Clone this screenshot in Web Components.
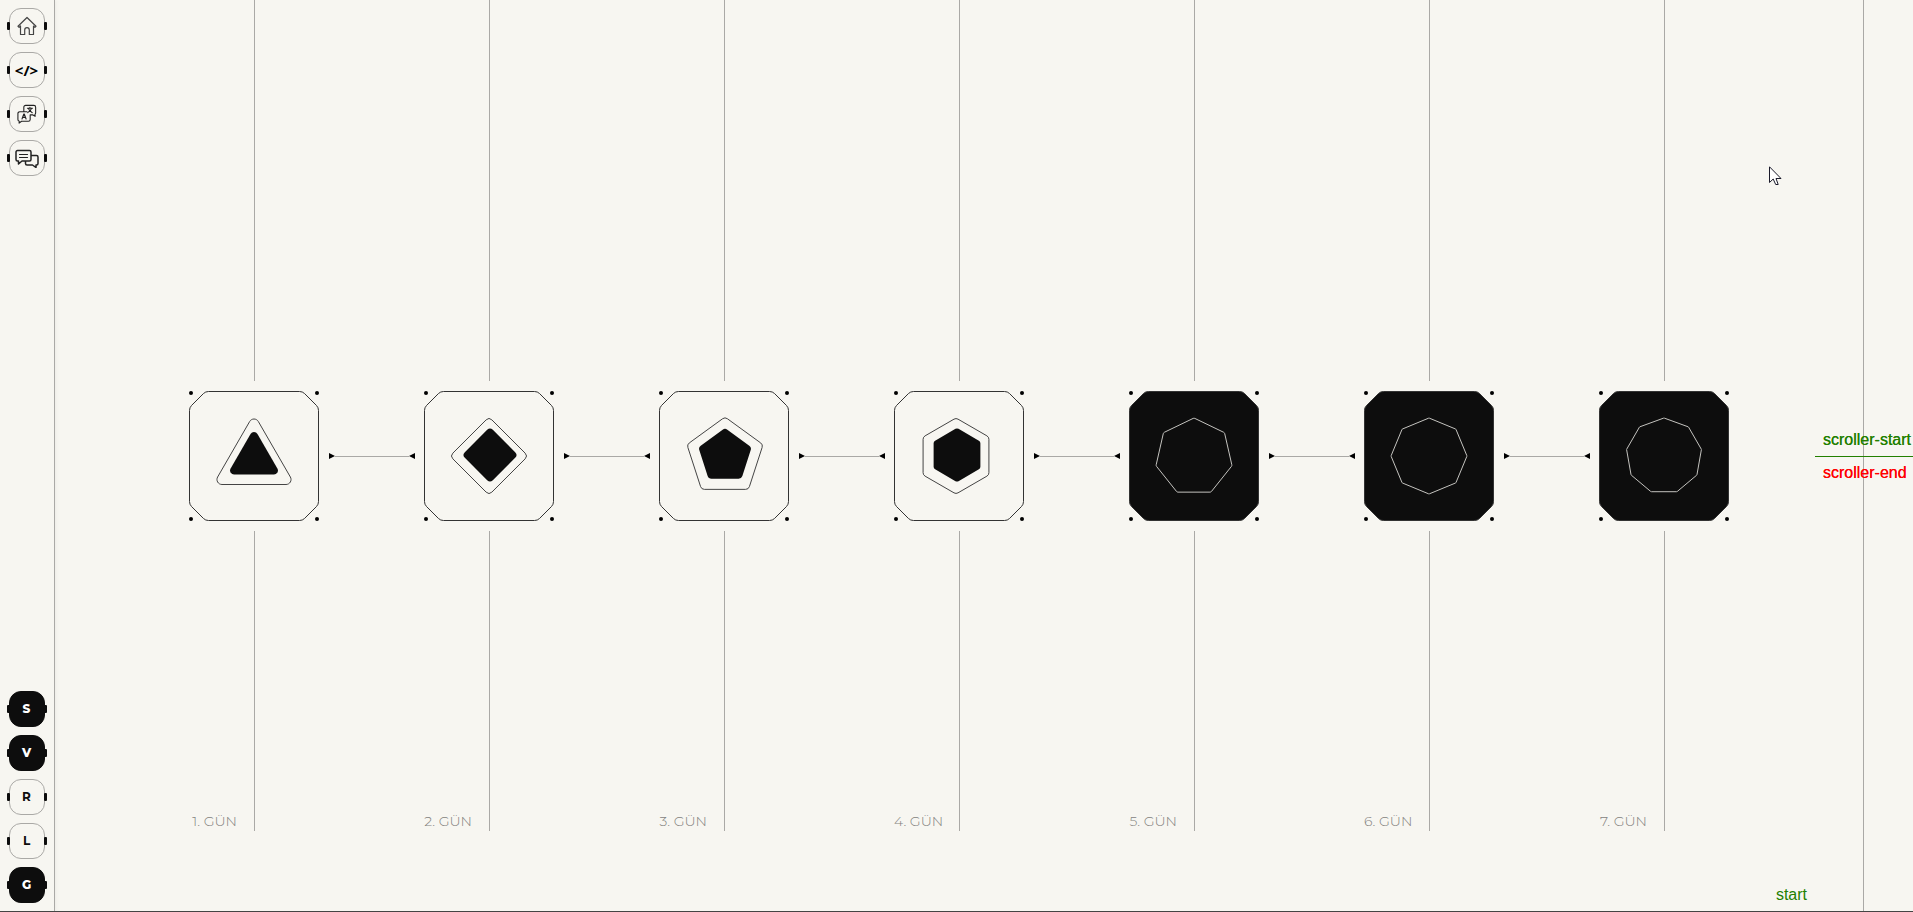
<!DOCTYPE html>
<html lang="tr">
<head>
<meta charset="utf-8">
<title>Haftalık Plan</title>
<style>
  :root { --bg: #f7f6f1; --ink: #0d0d0d; --rule: #aaa9a6; }
  body { margin: 0; background: var(--bg); color: var(--ink); font-family: Montserrat, Inter, sans-serif; }
</style>
</head>
<body>
<week-app></week-app>
<script>
const SHAPES = [
  { outer: [3, 65, 70, 47, 5], inner: [3, 65, 68, 31, 4] },
  { outer: [4, 65, 65, 39, 4], inner: [4, 66, 64, 28, 4] },
  { outer: [5, 66, 66, 40, 4], inner: [5, 66, 65, 28, 4] },
  { outer: [6, 62, 65, 38, 4], inner: [6, 63, 64, 27, 3] },
  { outer: [7, 65, 66, 39, 2], dark: true },
  { outer: [8, 65, 65, 38, 1], dark: true },
  { outer: [9, 65, 65, 38, 1], dark: true }
];

// Path of a regular polygon, one vertex up, with its corners rounded to the given radius.
function polygon([sides, cx, cy, size, radius]) {
  const half = Math.PI * (sides - 2) / sides / 2;
  const cut = radius / Math.tan(half);
  const pts = Array.from({ length: sides }, (_, i) => {
    const a = -Math.PI / 2 + i * 2 * Math.PI / sides;
    return [cx + size * Math.cos(a), cy + size * Math.sin(a)];
  });
  const toward = (p, q) => {
    const d = Math.hypot(q[0] - p[0], q[1] - p[1]);
    return [p[0] + (q[0] - p[0]) * cut / d, p[1] + (q[1] - p[1]) * cut / d].map(n => n.toFixed(2)).join(' ');
  };
  return pts.map((p, i) => {
    const prev = pts[(i + sides - 1) % sides], next = pts[(i + 1) % sides];
    return `${i ? 'L' : 'M'}${toward(p, prev)}A${radius} ${radius} 0 0 1 ${toward(p, next)}`;
  }).join('') + 'Z';
}

class DockButton extends HTMLElement {
  constructor() {
    super();
    this.attachShadow({ mode: 'open' }).innerHTML = `
      <style>
        :host { display: block; position: relative; width: 36px; height: 36px; }
        :host::before, :host::after { content: ""; position: absolute; top: 14px; width: 3px; height: 8px; border-radius: 1px; background: var(--ink); }
        :host::before { left: -2px; }
        :host::after { right: -2px; }
        button { display: grid; place-items: center; box-sizing: border-box; width: 100%; height: 100%; margin: 0; padding: 0 1px 1px 0;
          border: 1px solid var(--rule); border-radius: 12px; background: var(--bg); color: var(--ink);
          font: 700 12px/16px Montserrat, Inter, sans-serif; cursor: pointer; }
        :host([filled]) button { background: var(--ink); border-color: var(--ink); color: #fff; font-weight: 800; }
        :host([code]) button { font: 700 15px/16px "Noto Sans", sans-serif; color: #000; }
      </style>
      <button type="button"><slot></slot></button>`;
    this.shadowRoot.querySelector('button').setAttribute('aria-label', this.getAttribute('label') || this.textContent.trim());
  }
}

class SideDock extends HTMLElement {
  constructor() {
    super();
    this.attachShadow({ mode: 'open' }).innerHTML = `
      <style>
        :host { display: block; flex: none; box-sizing: border-box; width: 55px; border-right: 1px solid var(--rule); box-shadow: 1px 0 4px #0000000c; }
        nav { display: flex; flex-direction: column; justify-content: space-between; box-sizing: border-box; height: 100%; padding: 8px 9px 9px; }
        div { display: grid; gap: 8px; }
        svg { display: block; fill: none; stroke: #222; }
      </style>
      <nav aria-label="Menü">
        <div>
          <dock-button label="Ana sayfa">
            <svg width="20" height="20" viewBox="0 0 20 20" stroke-width="1.200" stroke-linejoin="round"><path stroke="#444" d="M10 1.500 1 10.300l1.100 1.100L3.500 10V18.500H7.700V14a2.300 2.300 0 0 1 4.600 0v4.500h4.200V10l1.400 1.400L19 10.300Z"/></svg>
          </dock-button>
          <dock-button code label="Kod">&lt;/&gt;</dock-button>
          <dock-button label="Çeviri">
            <svg width="20" height="20" viewBox="0 0 22 22" stroke-width="1.200" stroke-linecap="round" stroke-linejoin="round"><path d="M7.500 8.500V3.500a2 2 0 0 1 2-2h9a2 2 0 0 1 2 2v6.500a2 2 0 0 1-.8 1.500l.3 2-2.500-1.500h-2.500M11 8.500H3a2 2 0 0 0-2 2v6.500a2 2 0 0 0 1.500 2l-.2 2L5 19h7.500a2 2 0 0 0 2-2v-5"/><path d="M11.500 4.700h5.500M14.200 3.500v1.200M12.500 4.900c.6 2 2.200 3.600 4.300 4.600M16 4.900c-.6 2-2.200 3.600-4.200 4.600M5.500 16.500l2-5.500h.5l2 5.500M6.300 14.700h3"/></svg>
          </dock-button>
          <dock-button label="Sohbet">
            <svg width="24" height="20" viewBox="0 0 24 20" stroke-width="1.500" stroke-linejoin="round"><path d="M2.500 2.500h12a1.500 1.500 0 0 1 1.500 1.500v7.500a1.500 1.500 0 0 1-1.500 1.500H7L3.500 16v-3h-1A1.500 1.500 0 0 1 1 11.500V4a1.500 1.500 0 0 1 1.500-1.500Z"/><path d="M16 7.500h5.500A1.500 1.500 0 0 1 23 9v6.500a1.500 1.500 0 0 1-1.500 1.500H21v2.500L17.500 17H12a1.500 1.500 0 0 1-1.500-1.500V13"/><path d="M4.500 6.500h8M4.500 9.500h8" stroke-width="1.200" stroke-linecap="round"/></svg>
          </dock-button>
        </div>
        <div>
          <dock-button filled>S</dock-button>
          <dock-button filled>V</dock-button>
          <dock-button>R</dock-button>
          <dock-button>L</dock-button>
          <dock-button filled>G</dock-button>
        </div>
      </nav>`;
  }
}

class DayColumn extends HTMLElement {
  constructor() {
    super();
    const day = Number(this.getAttribute('day'));
    const { outer, inner, dark } = SHAPES[day - 1];
    this.attachShadow({ mode: 'open' }).innerHTML = `
      <style>
        :host { display: grid; grid-template-rows: minmax(0, 1fr) 130px minmax(0, 1fr); gap: 10px; width: 130px; flex: none; }
        .line { width: 1px; margin-left: 65px; background: var(--rule); }
        .foot { display: flex; align-items: flex-end; padding-bottom: 81px; }
        .foot p { box-sizing: border-box; width: 65px; margin: 0; padding-right: 17px; text-align: right; white-space: nowrap;
          font: 300 14px/20px Montserrat, Inter, sans-serif; color: #84837f; }
        .foot .line { align-self: stretch; margin: 0; }
        button { display: block; padding: 0; border: 0; background: none; cursor: pointer; }
        svg { display: block; fill: none; stroke-width: 1; }
      </style>
      <div class="line"></div>
      <button type="button" aria-label="${day}. gün">
        <svg width="130" height="130" viewBox="0 0 130 130">
          <path fill="${dark ? '#0d0d0d' : 'none'}" stroke="#333" d="M.5 19.500Q.5 16.500 2.500 14.500L14.500 2.500Q16.500 .5 19.500 .5H110.500Q113.500 .5 115.500 2.500L127.500 14.500Q129.500 16.500 129.500 19.500V110.500Q129.500 113.500 127.500 115.500L115.500 127.500Q113.500 129.500 110.500 129.500H19.500Q16.500 129.500 14.500 127.500L2.500 115.500Q.5 113.500 .5 110.500Z"/>
          <path stroke="${dark ? '#c4c3bf' : '#444'}" d="${polygon(outer)}"/>
          ${inner ? `<path fill="#0d0d0d" d="${polygon(inner)}"/>` : ''}
          <g fill="#000"><circle cx="2" cy="2" r="2"/><circle cx="128" cy="2" r="2"/><circle cx="2" cy="128" r="2"/><circle cx="128" cy="128" r="2"/></g>
        </svg>
      </button>
      <div class="foot"><p>${day}. GÜN</p><div class="line"></div></div>`;
  }
}

class DayLink extends HTMLElement {
  constructor() {
    super();
    this.attachShadow({ mode: 'open' }).innerHTML = `
      <style>
        :host { display: flex; flex: 1; align-self: center; align-items: center; height: 6px; margin: 0 9px 0 10px; }
        span { flex: 1; height: 1px; background: var(--rule); }
        svg { display: block; }
      </style>
      <svg width="6" height="6"><path d="M0 0 6 3 0 6Z"/></svg><span></span><svg width="6" height="6"><path d="M6 0 0 3 6 6Z"/></svg>`;
  }
}

class ScrollMarkers extends HTMLElement {
  constructor() {
    super();
    this.attachShadow({ mode: 'open' }).innerHTML = `
      <style>
        :host { display: block; font: 16px/18px "Liberation Sans", Arial, sans-serif; }
        div { position: absolute; box-sizing: border-box; white-space: nowrap; }
        .start { right: 0; bottom: 50%; width: 98px; padding: 0 0 7px 8px; color: #228000; text-shadow: 0 0 0 #228000; }
        .end { right: 0; top: 50%; width: 98px; padding: 7px 0 0 8px; border-top: 1px solid #228000; color: #f00; text-shadow: 0 0 0 #f00; }
        .entry { right: 106px; bottom: 8px; color: #228000; }
      </style>
      <div class="start">scroller-start</div>
      <div class="end">scroller-end</div>
      <div class="entry">start</div>`;
  }
}

class MousePointer extends HTMLElement {
  constructor() {
    super();
    this.attachShadow({ mode: 'open' }).innerHTML = `
      <style>:host { display: block; position: absolute; right: 131px; top: 166px; } svg { display: block; }</style>
      <svg width="13" height="20" viewBox="0 0 13 20" aria-hidden="true"><path d="M.5 .8V16.500L4.200 13l2.500 5.500h2.500L7 12.500h5Z" fill="#fff" stroke="#1a1a2a"/></svg>`;
  }
}

class WeekApp extends HTMLElement {
  constructor() {
    super();
    const days = SHAPES.map((_, i) => `<day-column day="${i + 1}"></day-column>`).join('<day-link></day-link>');
    this.attachShadow({ mode: 'open' }).innerHTML = `
      <style>
        :host { display: flex; position: relative; height: 100vh; min-height: 600px; overflow: hidden; }
        :host::after { content: ""; position: absolute; left: 0; right: 0; bottom: 0; height: 1px; background: #444; }
        main { display: flex; flex: 1; min-width: 0; padding: 0 134px; }
        aside { flex: none; box-sizing: border-box; width: 50px; border-left: 1px solid var(--rule); }
      </style>
      <side-dock></side-dock>
      <main>${days}</main>
      <aside></aside>
      <scroll-markers></scroll-markers>
      <mouse-pointer></mouse-pointer>`;
  }
}

customElements.define('dock-button', DockButton);
customElements.define('side-dock', SideDock);
customElements.define('day-column', DayColumn);
customElements.define('day-link', DayLink);
customElements.define('scroll-markers', ScrollMarkers);
customElements.define('mouse-pointer', MousePointer);
customElements.define('week-app', WeekApp);
</script>
</body>
</html>
